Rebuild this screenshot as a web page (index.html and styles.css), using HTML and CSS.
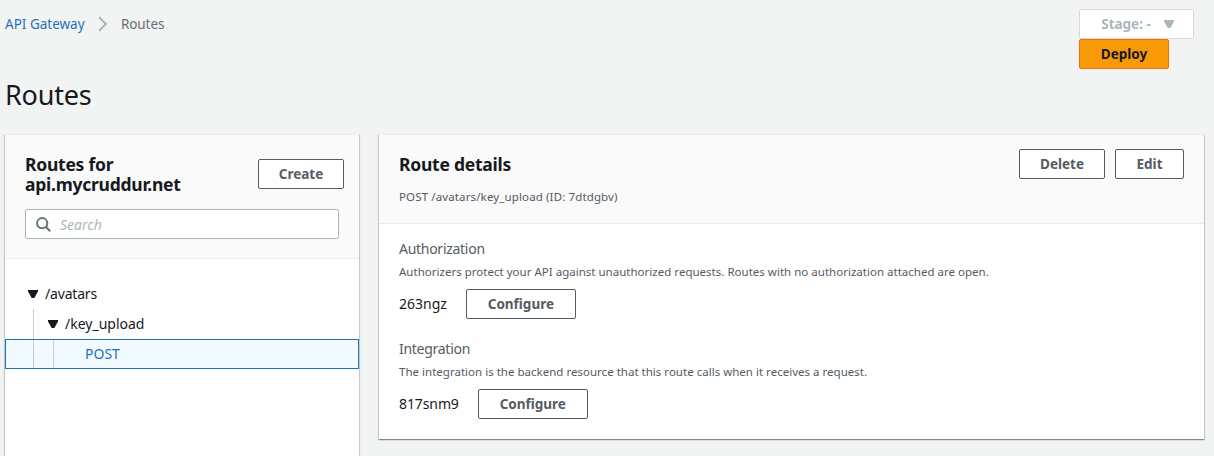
FILE: index.html
```
<!DOCTYPE html>
<html lang="en">
<head>
<meta charset="utf-8">
<title>API Gateway - Routes</title>
<link rel="stylesheet" href="styles.css">
</head>
<body>
<div class="page">
  <header class="topbar">
    <nav class="breadcrumbs">
      <a class="crumb-link" href="#">API Gateway</a>
      <svg class="chevron" width="10" height="16" viewBox="0 0 10 16"><path d="M1 1.200 8 8 1 14.800" fill="none" stroke="#aab7b8" stroke-width="2"/></svg>
      <span class="crumb-current">Routes</span>
    </nav>
    <div class="actions">
      <button class="btn stage"><span>Stage: -</span><svg width="10" height="8" viewBox="0 0 10 8"><path d="M0 0h10v1.600L6.300 8H3.700L0 1.600z" fill="#aab7b8"/></svg></button>
      <button class="btn primary">Deploy</button>
    </div>
  </header>
  <h1 class="title">Routes</h1>
  <main class="columns">
    <section class="panel routes">
      <div class="routes-head">
        <div class="routes-row">
          <h2 class="heading"><span>Routes for</span><span>api.mycruddur.net</span></h2>
          <button class="btn create">Create</button>
        </div>
        <label class="search">
          <svg width="15" height="15" viewBox="0 0 15 15" fill="none" stroke="#687078" stroke-width="2"><circle cx="6.200" cy="6.200" r="5.100"/><path d="M9.800 9.800 14.200 14.200"/></svg>
          <span>Search</span>
        </label>
      </div>
      <div class="tree">
        <div class="node"><svg width="10" height="8" viewBox="0 0 10 8"><path d="M0 0h10v1.600L6.300 8H3.700L0 1.600z" fill="#16191f"/></svg><span class="folder">/avatars</span></div>
        <div class="node level2"><svg width="10" height="8" viewBox="0 0 10 8"><path d="M0 0h10v1.600L6.300 8H3.700L0 1.600z" fill="#16191f"/></svg><span>/key_upload</span></div>
        <div class="node selected"><i class="guide"></i><i class="guide"></i><span class="method">POST</span></div>
      </div>
    </section>
    <section class="panel details">
      <div class="details-head">
        <div>
          <h2 class="heading"><span>Route details</span></h2>
          <p class="subtitle">POST /avatars/key_upload (ID: 7dtdgbv)</p>
        </div>
        <div class="btns">
          <button class="btn delete">Delete</button>
          <button class="btn edit">Edit</button>
        </div>
      </div>
      <div class="details-body">
        <div class="field">
          <div class="label">Authorization</div>
          <div class="hint">Authorizers protect your API against unauthorized requests. Routes with no authorization attached are open.</div>
          <div class="value"><span>263ngz</span><button class="btn configure">Configure</button></div>
        </div>
        <div class="field">
          <div class="label">Integration</div>
          <div class="hint">The integration is the backend resource that this route calls when it receives a request.</div>
          <div class="value"><span class="tight">817snm9</span><button class="btn configure">Configure</button></div>
        </div>
      </div>
    </section>
  </main>
</div>
</body>
</html>
```
FILE: styles.css
```
* { box-sizing: border-box; }
body { margin: 0; background: #f2f3f3; color: #16191f; font: 14px/20px "Noto Sans", "Open Sans", sans-serif; overflow: hidden; }
h1, h2, p { margin: 0; }
.page { height: 456px; display: flex; flex-direction: column; overflow: hidden; white-space: nowrap; }
.topbar { height: 69px; padding: 9px 20px 0 5px; display: flex; justify-content: space-between; flex: none; }
.breadcrumbs { display: flex; height: 30px; align-items: center; font-size: 13.500px; }
.crumb-link { width: 80px; color: #1f73b9; text-decoration: none; }
.chevron { margin: 0 13px; }
.crumb-current { color: #687078; letter-spacing: -0.100px; }
.actions { width: 115px; display: flex; flex-direction: column; align-items: flex-start; }
.btn { height: 30px; padding: 0; display: flex; align-items: center; justify-content: center; flex: none; border: 1px solid #545b64; border-radius: 2px; background: #fff; color: #545b64; font: 700 13.500px/20px "Noto Sans", "Open Sans", sans-serif; }
.stage { width: 115px; gap: 13px; padding-left: 2px; border-color: #d5dbdb; color: #aab7b8; }
.primary { width: 90px; background: #f89a06; border-color: #ec7211; color: #16191f; }
.title { height: 66px; padding: 8px 0 0 5px; font-size: 27px; line-height: 36px; font-weight: 400; letter-spacing: -0.200px; flex: none; }
.columns { flex: 1; min-height: 0; padding: 0 10px 0 5px; display: flex; align-items: flex-start; gap: 20px; margin-top: -1px; }
.panel { background: #fff; border-top: 1px solid #eaeded; box-shadow: 0 1px 1px 0 rgba(0,28,36,.3), 1px 1px 1px 0 rgba(0,28,36,.15), -1px 1px 1px 0 rgba(0,28,36,.15); }
.routes { width: 354px; height: 400px; flex: none; }
.routes-head { height: 124px; padding: 20px 20px 0; background: #fafafa; border-bottom: 1px solid #eaeded; }
.routes-row { display: flex; justify-content: space-between; align-items: flex-start; margin-right: -5px; height: 54px; }
.create { width: 86px; margin-top: 4px; }
.heading { margin-top: -1px; font-size: 17.500px; line-height: 20px; font-weight: 700; letter-spacing: -0.250px; }
.heading span { display: block; }
.search { width: 314px; height: 30px; display: flex; align-items: center; gap: 9px; padding-left: 10px; border: 1px solid #aab7b8; border-radius: 2px; background: #fff; color: #aab7b8; font-style: italic; }
.search span { padding-top: 1px; }
.tree { padding-top: 20px; }
.node { height: 30px; display: flex; align-items: center; padding-left: 23px; gap: 7px; }
.folder { letter-spacing: -0.180px; }
.level2 { margin-left: 28px; padding-left: 14px; border-left: 1px solid #ccc; }
.selected { background: #f1faff; border: 1px solid #1f73b9; padding-left: 27px; gap: 19px; align-items: stretch; color: #1f73b9; line-height: 28px; }
.guide { width: 1px; background: #ccc; }
.method { margin-left: 12px; }
.details { flex: 1; height: 305px; }
.details-head { height: 89px; padding: 20px 20px 0; display: flex; justify-content: space-between; background: #fafafa; border-bottom: 1px solid #eaeded; }
.subtitle { margin-top: 13px; font-size: 11.500px; line-height: 20px; color: #545b64; letter-spacing: 0.130px; }
.btns { display: flex; gap: 10px; margin-top: -6px; }
.delete { width: 86px; }
.edit { width: 69px; }
.details-body { padding: 15px 20px 0; display: flex; flex-direction: column; gap: 20px; }
.field { height: 80px; }
.label { height: 20px; color: #545b64; letter-spacing: -0.280px; }
.hint { height: 30px; padding-top: 4px; font-size: 11.500px; line-height: 18px; color: #545b64; letter-spacing: 0.015px; }
.value { display: flex; align-items: center; height: 30px; gap: 19px; }
.tight { letter-spacing: -0.100px; }
.configure { width: 110px; }
```
